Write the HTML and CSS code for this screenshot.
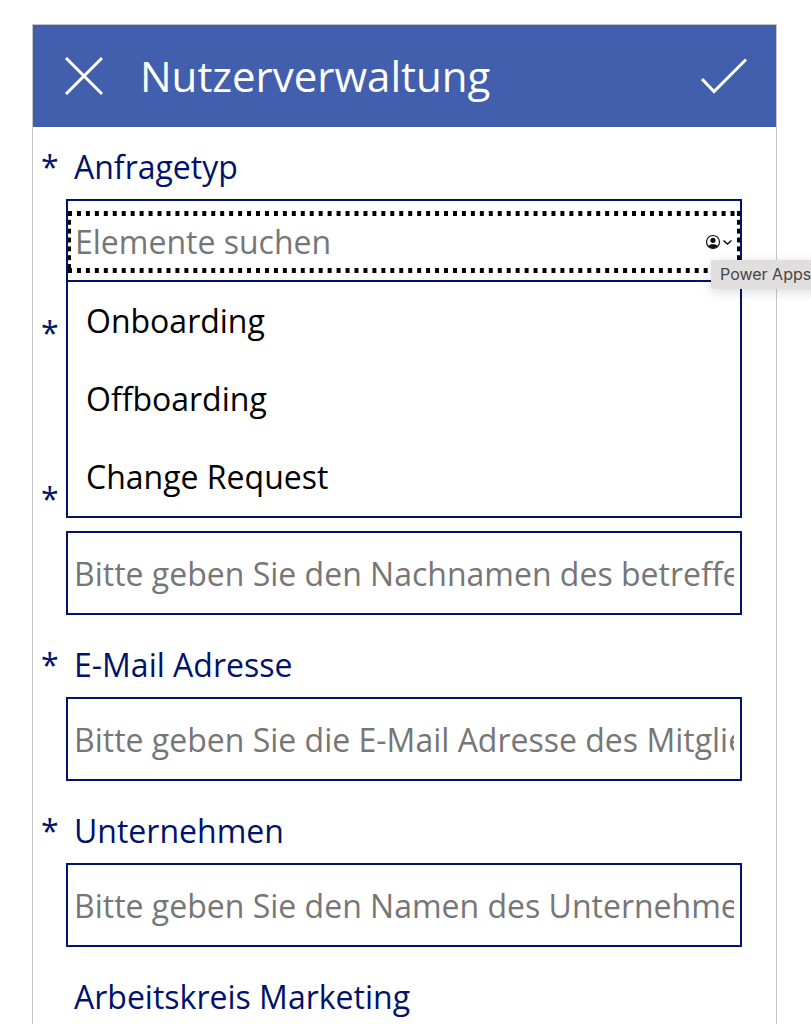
FILE: index.html
```html
<!DOCTYPE html>
<html lang="de">
<head>
    <meta charset="UTF-8">
    <meta name="viewport" content="width=device-width, initial-scale=1.0">
    <title>Nutzerverwaltung</title>
    <link rel="stylesheet" href="styles.css">
</head>
<body>
    <main class="app">
        <header class="header">
            <button class="icon-button" type="button" aria-label="Abbrechen">
                <svg width="40" height="40" viewBox="0 0 40 40"><path d="M2 2L38 38M38 2L2 38"/></svg>
            </button>
            <h1>Nutzerverwaltung</h1>
            <button class="icon-button" type="submit" form="userForm" aria-label="Senden">
                <svg width="48" height="40" viewBox="0 0 48 40"><path d="M2 23L14 35.500L46 3.500"/></svg>
            </button>
        </header>

        <form class="form" id="userForm">
            <div class="field">
                <span class="required">*</span>
                <label for="requestType">Anfragetyp</label>
                <div class="combo">
                    <div class="combo-focus">
                        <input class="combo-input" id="requestType" type="text" role="combobox" aria-expanded="true" aria-controls="requestTypes" placeholder="Elemente suchen">
                        <svg class="account-icon" width="28" height="16" viewBox="0 0 28 16">
                            <circle cx="8" cy="8" r="6.500" fill="none" stroke="#111" stroke-width="1.200"/>
                            <circle cx="8" cy="6.300" r="2.600" fill="#111"/>
                            <path d="M3.200 12C4.500 9.800 11.500 9.800 12.800 12C10.500 15.200 5.500 15.200 3.200 12Z" fill="#111"/>
                            <path d="M18.500 6.500L22.500 10L26.500 6.500" fill="none" stroke="#111" stroke-width="1.600"/>
                        </svg>
                    </div>
                    <ul class="menu" id="requestTypes" role="listbox">
                        <li role="option">Onboarding</li>
                        <li role="option">Offboarding</li>
                        <li role="option">Change Request</li>
                    </ul>
                    <div class="tooltip" role="tooltip">Power Apps</div>
                </div>
            </div>

            <div class="field">
                <span class="required">*</span>
                <input class="text-input" id="firstName" type="text" aria-label="Vorname">
            </div>

            <div class="field">
                <span class="required">*</span>
                <input class="text-input" id="lastName" type="text" aria-label="Nachname" placeholder="Bitte geben Sie den Nachnamen des betreffenden Mitglieds ein">
            </div>

            <div class="field">
                <span class="required">*</span>
                <label for="email">E-Mail Adresse</label>
                <input class="text-input" id="email" type="email" placeholder="Bitte geben Sie die E-Mail Adresse des Mitglieds ein">
            </div>

            <div class="field">
                <span class="required">*</span>
                <label for="company">Unternehmen</label>
                <input class="text-input" id="company" type="text" placeholder="Bitte geben Sie den Namen des Unternehmens ein">
            </div>

            <div class="field">
                <label for="marketing">Arbeitskreis Marketing</label>
                <input class="text-input" id="marketing" type="text">
            </div>
        </form>
    </main>
</body>
</html>
```
FILE: styles.css
```css
* {
    box-sizing: border-box;
}
html {
    height: 100%;
    overflow: hidden;
}
body {
    font-family: "Open Sans", "Noto Sans", sans-serif;
    font-size: 32px;
    color: #000;
    background-color: #fff;
    margin: 0;
    padding: 24px 34px 0 32px;
    height: 100%;
    overflow: hidden;
}
.app {
    border: 1px solid #c4c6c8;
}
.header {
    display: flex;
    align-items: center;
    height: 102px;
    padding: 0 28px 0 31px;
    background-color: #425fad;
    color: #fff;
}
.header h1 {
    flex: 1;
    margin: 0 0 0 36px;
    font-size: 42px;
    font-weight: 400;
    line-height: 56px;
}
.icon-button {
    display: flex;
    padding: 0;
    border: none;
    background: none;
    cursor: pointer;
}
.icon-button path {
    fill: none;
    stroke: #fff;
    stroke-width: 3;
}
.form {
    display: flex;
    flex-direction: column;
    gap: 18px;
    padding: 8px 34px 0 8px;
}
.field {
    display: grid;
    grid-template-columns: 25px minmax(0, 1fr);
    grid-template-rows: 64px 84px;
    line-height: 64px;
    color: #00126b;
}
.required {
    font-weight: 500;
}
.field label {
    grid-column: 2;
    padding-left: 8px;
}
.combo,
.text-input {
    grid-column: 2;
    grid-row: 2;
    width: 100%;
    height: 84px;
    border: 2px solid #00126b;
    background-color: #fff;
}
.text-input,
.combo-input {
    font: inherit;
    color: #000;
    border-radius: 0;
    outline: none;
}
.text-input {
    padding: 0 6px;
}
::placeholder {
    color: #767676;
    opacity: 1;
}
.combo {
    position: relative;
    padding: 10px 0 8px;
}
/* square dotted focus ring, thinner on the left and right */
.combo-focus {
    display: flex;
    align-items: center;
    height: 62px;
    padding: 0 7px 0 7px;
    background-image:
        linear-gradient(90deg, #000 50%, transparent 50%),
        linear-gradient(90deg, #000 50%, transparent 50%),
        linear-gradient(#000 50%, transparent 50%),
        linear-gradient(#000 50%, transparent 50%);
    background-size: 9px 5px, 9px 5px, 3px 9px, 3px 9px;
    background-position: 0 0, 0 100%, 0 0, 100% 0;
    background-repeat: round no-repeat, round no-repeat, no-repeat round, no-repeat round;
}
.combo-input {
    flex: 1;
    min-width: 0;
    height: 52px;
    padding: 0;
    border: none;
    background: none;
}
.menu {
    position: absolute;
    z-index: 1;
    top: 79px;
    left: -2px;
    right: -2px;
    margin: 0;
    padding: 0;
    border: 2px solid #00126b;
    background-color: #fff;
    color: #000;
    list-style: none;
    line-height: 78px;
}
.menu li {
    padding-left: 18px;
}
.tooltip {
    position: absolute;
    z-index: 2;
    top: 59px;
    left: calc(100% - 29px);
    padding: 0 9px;
    background-color: #e0dfdd;
    box-shadow: 0 3px 12px rgba(0, 20, 80, 0.15);
    color: #454545;
    font-family: Inter, sans-serif;
    font-size: 16px;
    line-height: 29px;
    white-space: nowrap;
}
```
